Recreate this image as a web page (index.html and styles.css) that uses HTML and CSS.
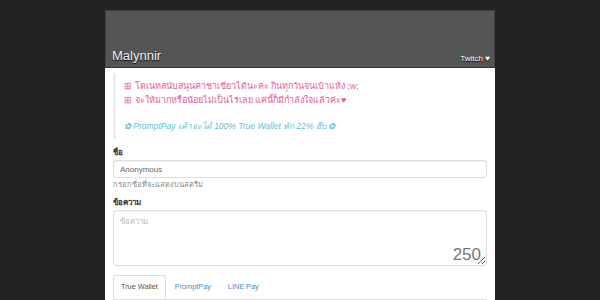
FILE: index.html
```html
<!DOCTYPE html>
<html lang="th">
<head>
  <meta charset="UTF-8" />
  <meta name="viewport" content="width=device-width, initial-scale=1.0" />
  <title>Malynnir - Donate</title>
  <link rel="stylesheet" href="styles.css">
</head>
<body>
  <div class="panel">
    <div class="banner">
      <span class="streamer">Malynnir</span>
      <a class="twitch" href="#">Twitch ♥</a>
    </div>
    <div class="content">
      <blockquote class="note">
        <p class="pink">⊞ โดเนทสนับสนุนค่าชาเขียวได้นะคะ กินทุกวันจนเป๋าแห้ง ;w;</p>
        <p class="pink">⊞ จะให้มากหรือน้อยไม่เป็นไรเลย แค่นี้ก็มีกำลังใจแล้วค่ะ♥</p>
        <p class="blue">✿ PromptPay เค้าจะได้ 100% True Wallet หัก 22% ฮึบ ✿</p>
      </blockquote>

      <label for="name">ชื่อ</label>
      <input type="text" id="name" value="Anonymous" />
      <div class="help">กรอกชื่อที่จะแสดงบนสตรีม</div>

      <label for="msg">ข้อความ</label>
      <div class="msg-box">
        <textarea id="msg" placeholder="ข้อความ"></textarea>
        <span class="counter">250</span>
      </div>

      <ul class="tabs">
        <li class="active"><a href="#">True Wallet</a></li>
        <li><a href="#">PromptPay</a></li>
        <li><a href="#">LINE Pay</a></li>
      </ul>
    </div>
  </div>
</body>
</html>
```

FILE: styles.css
```css
body {
  margin: 0;
  background: #222;
  font-family: "Liberation Sans", Arial, sans-serif;
  font-size: 9px;
  color: #333;
  overflow: hidden;
}
.panel {
  width: 390px;
  margin: 10px auto 0;
}
.banner {
  height: 58px;
  background: #555;
  border: 1px solid #444;
  border-bottom: 1px solid #333;
  display: flex;
  align-items: flex-end;
  justify-content: space-between;
  padding: 0 4px 3px 6px;
  box-sizing: border-box;
}
.streamer {
  color: #f2f2f2;
  font-size: 13px;
  line-height: 16px;
  text-shadow: 0 1px 1px #000;
}
.twitch {
  color: #fff;
  font-size: 8px;
  text-decoration: none;
  text-shadow: 0 1px 1px #000;
  margin-bottom: 1px;
}
.content {
  background: #fff;
  padding: 5px 8px 0;
  height: 240px;
}
.note {
  margin: 0 0 8px;
  padding: 6px 10px 6px 8px;
  border-left: 3px solid #eee;
}
.note p {
  margin: 0;
  font-size: 9px;
  line-height: 14px;
}
.pink {
  color: #e8609a;
}
.blue {
  color: #5bc0de;
  font-style: italic;
  font-size: 8.5px !important;
  margin-top: 12px !important;
}
label {
  display: block;
  font-weight: bold;
  color: #333;
  font-size: 8px;
  line-height: 12px;
  margin: 0 0 1px;
}
input[type="text"], textarea {
  display: block;
  width: 100%;
  box-sizing: border-box;
  border: 1px solid #ddd;
  border-radius: 3px;
  font-family: inherit;
  font-size: 8px;
  color: #666;
  box-shadow: inset 0 1px 1px rgba(0, 0, 0, 0.05);
  margin: 0;
}
input[type="text"] {
  height: 18px;
  padding: 2px 6px;
}
.help {
  color: #888;
  font-size: 7.5px;
  line-height: 12px;
  margin: 1px 0 6px;
}
.msg-box {
  position: relative;
}
textarea {
  height: 56px;
  padding: 4px 6px;
  resize: vertical;
}
textarea::placeholder {
  color: #bbb;
}
.counter {
  position: absolute;
  right: 6px;
  bottom: 1px;
  font-size: 17px;
  color: #777;
}
.tabs {
  list-style: none;
  margin: 9px 0 0;
  padding: 0;
  display: flex;
  border-bottom: 1px solid #ddd;
}
.tabs li a {
  display: block;
  padding: 6px 7px;
  line-height: 10px;
  color: #3f8fc6;
  text-decoration: none;
  font-size: 7.3px;
  border: 1px solid transparent;
  border-radius: 3px 3px 0 0;
  margin-right: 1px;
}
.tabs li.active a {
  color: #555;
  border-color: #ddd #ddd transparent;
  background: #fff;
  margin-bottom: -1px;
}
```
